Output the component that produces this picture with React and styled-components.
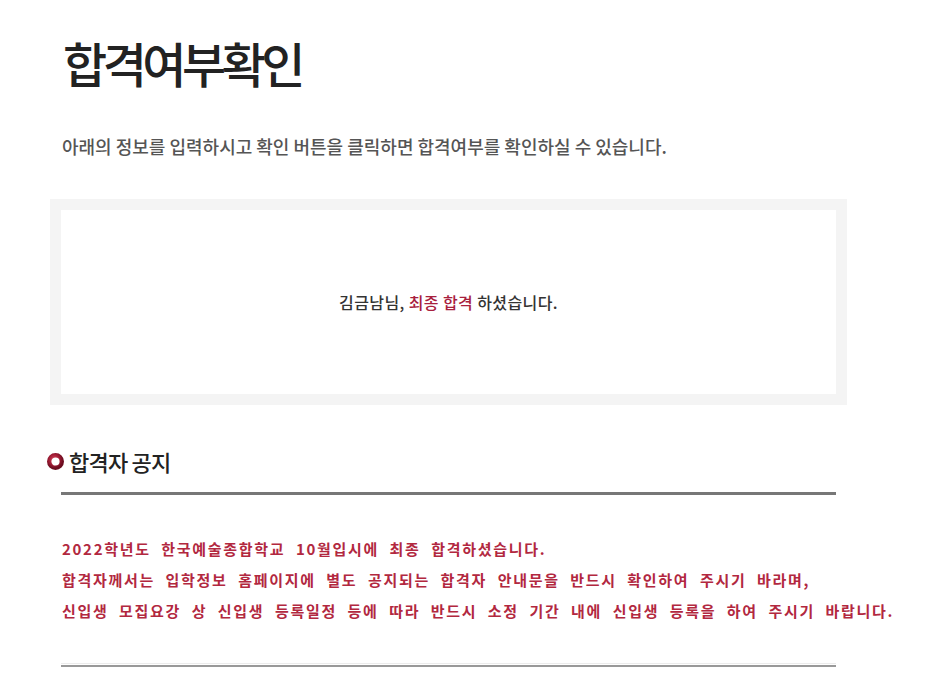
import React from "react";
import styled, { createGlobalStyle } from "styled-components";

const Global = createGlobalStyle`
  html, body { margin: 0; padding: 0; background: #fff; }
  body { font-family: "Noto Sans CJK KR", "Noto Sans", sans-serif; }
`;

const Page = styled.div`
  width: 948px;
  height: 685px;
  overflow: hidden;
  padding: 0 0 0 50px;
  box-sizing: border-box;
`;

const Title = styled.h1`
  margin: 0;
  padding: 32px 0 0 13px;
  font-size: 48px;
  line-height: 60px;
  font-weight: 500;
  letter-spacing: -4.5px;
  color: #222;
`;

const Lead = styled.p`
  margin: 0;
  padding: 42px 0 0 12px;
  font-size: 18px;
  line-height: 24px;
  letter-spacing: 0;
  color: #555;
  font-weight: 500;
`;

const ResultFrame = styled.div`
  margin-top: 41px;
  width: 797px;
  height: 206px;
  box-sizing: border-box;
  border: 11px solid #f4f4f4;
  display: flex;
  align-items: center;
  justify-content: center;
  background: #fff;
`;

const Message = styled.p`
  margin: 0;
  font-size: 16px;
  color: #333;
  letter-spacing: 0.4px;
  font-weight: 500;
`;

const Em = styled.span`
  color: #a8203d;
`;

const SectionHead = styled.div`
  margin: 43px 0 0 -4px;
  display: flex;
  align-items: center;
  gap: 4px;
`;

const SectionTitle = styled.h2`
  margin: 0;
  font-size: 22px;
  line-height: 26px;
  font-weight: 500;
  color: #222;
  letter-spacing: -0.8px;
`;

const Rule = styled.hr`
  margin: 18px 0 0 11px;
  width: 775px;
  border: 0;
  height: 3px;
  background: #777;
`;

const Notice = styled.div`
  padding: 38px 0 0 12px;
  color: #b2283f;
  font-size: 15px;
  font-weight: 700;
  line-height: 31px;
  letter-spacing: 1.7px;
  word-spacing: 5.5px;
`;

const Line = styled.div`
  white-space: nowrap;
`;

const BottomRule = styled.div`
  margin: 37px 0 0 11px;
  width: 775px;
  height: 1px;
  border-top: 1px solid #ececec;
  border-bottom: 2px solid #999;
`;

function RingIcon() {
  return (
    <svg width="19" height="19" viewBox="0 0 19 19">
      <defs>
        <radialGradient id="rg" cx="40%" cy="35%" r="70%">
          <stop offset="0%" stopColor="#d8455e" />
          <stop offset="60%" stopColor="#a01c35" />
          <stop offset="100%" stopColor="#6b0c1f" />
        </radialGradient>
      </defs>
      <circle cx="9.5" cy="9.5" r="6.3" fill="none" stroke="url(#rg)" strokeWidth="4.4" />
    </svg>
  );
}

export default function App() {
  return (
    <>
      <Global />
      <Page>
        <Title>합격여부확인</Title>
        <Lead>아래의 정보를 입력하시고 확인 버튼을 클릭하면 합격여부를 확인하실 수 있습니다.</Lead>
        <ResultFrame>
          <Message>
            김금남님, <Em>최종 합격</Em> 하셨습니다.
          </Message>
        </ResultFrame>
        <SectionHead>
          <RingIcon />
          <SectionTitle>합격자 공지</SectionTitle>
        </SectionHead>
        <Rule />
        <Notice>
          <Line>2022학년도 한국예술종합학교 10월입시에 최종 합격하셨습니다.</Line>
          <Line>합격자께서는 입학정보 홈페이지에 별도 공지되는 합격자 안내문을 반드시 확인하여 주시기 바라며,</Line>
          <Line>신입생 모집요강 상 신입생 등록일정 등에 따라 반드시 소정 기간 내에 신입생 등록을 하여 주시기 바랍니다.</Line>
        </Notice>
        <BottomRule />
      </Page>
    </>
  );
}
